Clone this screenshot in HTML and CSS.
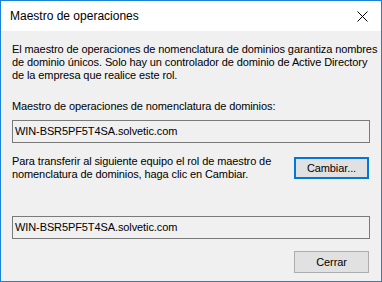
FILE: index.html
```html
<!DOCTYPE html>
<html lang="es">
<head>
<meta charset="utf-8">
<title>Maestro de operaciones</title>
<link rel="stylesheet" href="styles.css">
</head>
<body>
<div class="window">
  <div class="titlebar">
    <span class="title">Maestro de operaciones</span>
    <span class="close" aria-label="Cerrar">
      <svg width="11" height="11" viewBox="0 0 11 11"><path d="M0.5 0.5 L10.5 10.5 M10.5 0.5 L0.5 10.5" stroke="#000" stroke-width="1" fill="none"/></svg>
    </span>
  </div>
  <div class="content">
    <p class="intro">El maestro de operaciones de nomenclatura de dominios garantiza nombres<br>de dominio únicos. Solo hay un controlador de dominio de Active Directory<br>de la empresa que realice este rol.</p>
    <p class="label">Maestro de operaciones de nomenclatura de dominios:</p>
    <div class="field">WIN-BSR5PF5T4SA.solvetic.com</div>
    <div class="transfer">
      <p class="transfer-text">Para transferir al siguiente equipo el rol de maestro de<br>nomenclatura de dominios, haga clic en Cambiar.</p>
      <button class="btn btn-default">Cambiar...</button>
    </div>
    <div class="field field-second">WIN-BSR5PF5T4SA.solvetic.com</div>
    <div class="actions">
      <button class="btn">Cerrar</button>
    </div>
  </div>
</div>
</body>
</html>
```
FILE: styles.css
```css
html, body {
  margin: 0;
  padding: 0;
}
body {
  font-family: "Liberation Sans", Arial, sans-serif;
  font-size: 11px;
  color: #000;
  background: #fff;
}
.window {
  width: 382px;
  height: 282px;
  box-sizing: border-box;
  border: 1px solid #1883d7;
  display: flex;
  flex-direction: column;
}
.titlebar {
  height: 30px;
  flex: none;
  background: #fff;
  display: flex;
  align-items: center;
  justify-content: space-between;
  padding: 0 9px 0 9px;
}
.title {
  font-size: 12px;
  line-height: 16px;
  color: #000;
}
.close {
  width: 11px;
  height: 11px;
  display: flex;
  margin-right: 4px;
}
.content {
  flex: 1;
  background: #f0f0f0;
  padding: 12px 11px 0 11px;
  line-height: 13px;
  letter-spacing: -0.1px;
}
p {
  margin: 0;
  white-space: nowrap;
}
.label {
  margin-top: 18px;
}
.field {
  margin-top: 7px;
  height: 23px;
  box-sizing: border-box;
  border: 1px solid #7a7a7a;
  padding: 0 2px;
  display: flex;
  align-items: center;
  font-size: 11px;
}
.field-second {
  margin-top: 35px;
}
.transfer {
  margin-top: 12px;
  display: flex;
  justify-content: space-between;
  align-items: flex-start;
}
.btn {
  width: 75px;
  height: 22px;
  box-sizing: border-box;
  border: 1px solid #adadad;
  background: #e1e1e1;
  font-family: "Liberation Sans", Arial, sans-serif;
  font-size: 11px;
  letter-spacing: -0.1px;
  color: #000;
  padding: 0;
  margin: 0 1px 0 0;
}
.btn-default {
  margin-top: 2px;
  border: 2px solid #0078d7;
}
.actions {
  display: flex;
  justify-content: flex-end;
  margin-top: 12px;
}
```
